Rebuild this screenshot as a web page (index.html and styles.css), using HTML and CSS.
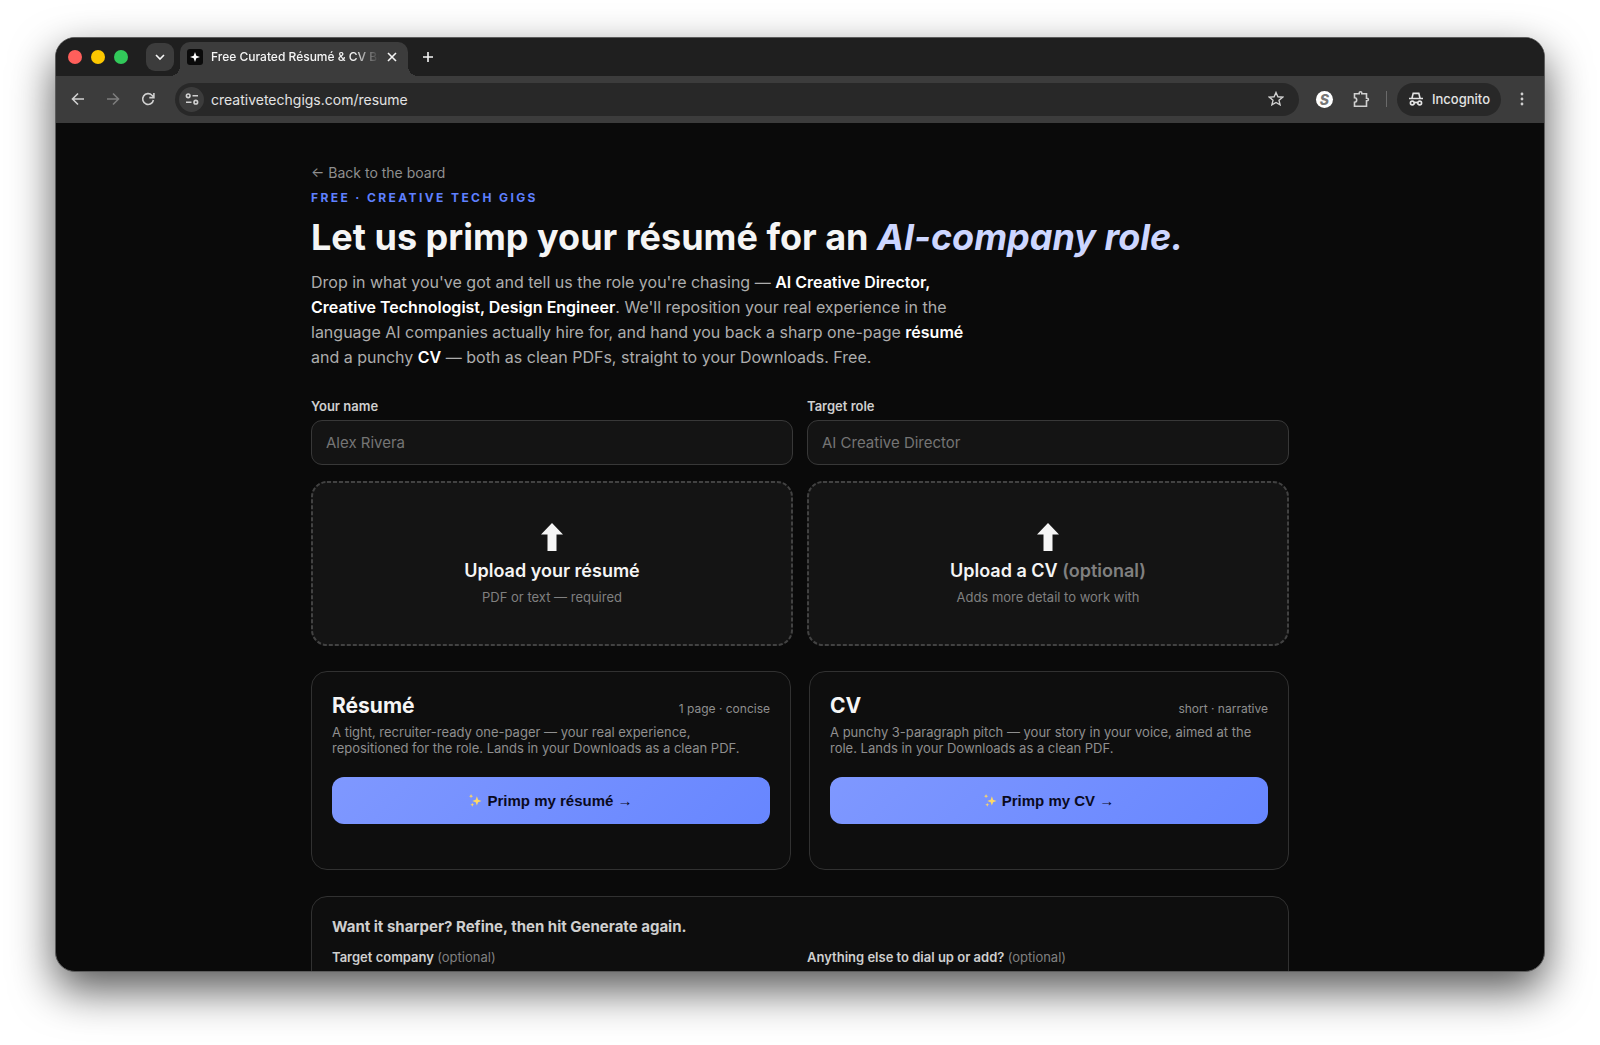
FILE: index.html
```html
<!DOCTYPE html>
<html lang="en">
<head>
  <meta charset="UTF-8">
  <title>Free Curated Résumé &amp; CV Builder</title>
  <link rel="stylesheet" href="styles.css">
</head>
<body>
  <div class="window">
    <div class="tab-strip">
      <div class="lights">
        <span class="light red"></span>
        <span class="light yellow"></span>
        <span class="light green"></span>
      </div>
      <button class="tab-search" aria-label="Search tabs">
        <svg width="12" height="12" viewBox="0 0 12 12"><path d="M2 4l4 4 4-4"/></svg>
      </button>
      <div class="tab">
        <svg class="favicon" width="16" height="16" viewBox="0 0 16 16">
          <rect width="16" height="16" rx="3"/>
          <path d="M8 3l1.300 3.700L13 8l-3.700 1.300L8 13l-1.300-3.700L3 8l3.700-1.300z"/>
        </svg>
        <span class="tab-title">Free Curated Résumé &amp; CV Builder</span>
        <button class="tab-close" aria-label="Close tab">
          <svg width="10" height="10" viewBox="0 0 10 10"><path d="M1 1l8 8M9 1l-8 8"/></svg>
        </button>
      </div>
      <button class="new-tab" aria-label="New tab">
        <svg width="12" height="12" viewBox="0 0 12 12"><path d="M6 1v10M1 6h10"/></svg>
      </button>
    </div>

    <div class="toolbar">
      <div class="nav">
        <button aria-label="Back">
          <svg width="16" height="16" viewBox="0 0 16 16"><path d="M14 8H3M8 2.500L2.500 8 8 13.500"/></svg>
        </button>
        <button class="off" aria-label="Forward">
          <svg width="16" height="16" viewBox="0 0 16 16"><path d="M2 8h11M8 2.500L13.500 8 8 13.500"/></svg>
        </button>
        <button aria-label="Reload">
          <svg width="16" height="16" viewBox="0 0 16 16"><path d="M13.400 9A5.400 5.400 0 1 1 12 4.300L13.800 6M13.900 2v4.600H9.300"/></svg>
        </button>
      </div>
      <div class="address">
        <button class="site-info" aria-label="Site information">
          <svg width="14" height="14" viewBox="0 0 14 14"><circle cx="3.200" cy="3.800" r="1.800"/><path d="M7.500 3.800H13M1 10.200h5.500"/><circle cx="10.800" cy="10.200" r="1.800"/></svg>
        </button>
        <input class="url" type="text" aria-label="Address" value="creativetechgigs.com/resume">
        <button class="star" aria-label="Bookmark this page">
          <svg width="16" height="16" viewBox="0 0 16 16"><path d="M8 1.500l1.900 4.300 4.700.4-3.600 3.100 1.100 4.600L8 11.500l-4.100 2.400L5 9.300 1.400 6.200l4.700-.4z"/></svg>
        </button>
      </div>
      <button class="ext" aria-label="Extension">S</button>
      <button class="puzzle" aria-label="Extensions">
        <svg width="18" height="18" viewBox="0 0 18 18"><path d="M2.500 3.800h4.700V3a1.300 1.300 0 0 1 2.600 0v.8h4.700v4.400h.6a1.300 1.300 0 0 1 0 2.600h-.6v5.400h-12v-4a2.200 2.200 0 0 0 0-4.400z"/></svg>
      </button>
      <span class="divider"></span>
      <button class="incognito">
        <svg width="16" height="16" viewBox="0 0 16 16"><path d="M4 7l1.200-4.600h5.600L12 7M1 7.500h14M6 12q2-1.200 4 0"/><circle cx="4.300" cy="12" r="1.900"/><circle cx="11.700" cy="12" r="1.900"/></svg>
        Incognito
      </button>
      <button class="menu" aria-label="Menu">
        <svg width="4" height="14" viewBox="0 0 4 14"><circle cx="2" cy="2" r="1.400"/><circle cx="2" cy="7" r="1.400"/><circle cx="2" cy="12" r="1.400"/></svg>
      </button>
    </div>

    <div class="page">
      <main class="container">
        <a class="back" href="/">← Back to the board</a>
        <p class="eyebrow">Free · Creative Tech Gigs</p>
        <h1>Let us primp your résumé for an <em>AI-company role.</em></h1>
        <p class="lead">Drop in what you've got and tell us the role you're chasing — <b>AI Creative Director, Creative Technologist, Design Engineer</b>. We'll reposition your real experience in the language AI companies actually hire for, and hand you back a sharp one-page <b>résumé</b> and a punchy <b>CV</b> — both as clean PDFs, straight to your Downloads. Free.</p>

        <form id="resumeForm">
          <div class="row">
            <div class="field">
              <label for="name">Your name</label>
              <input type="text" id="name" name="name" placeholder="Alex Rivera">
            </div>
            <div class="field">
              <label for="role">Target role</label>
              <input type="text" id="role" name="role" placeholder="AI Creative Director">
            </div>
          </div>

          <div class="row drops">
            <label class="drop" for="resumeFile">
              <svg class="dashes"><rect/></svg>
              <input type="file" id="resumeFile" name="resume">
              <svg class="up" width="22" height="28" viewBox="0 0 22 28"><path d="M11 0l11 11.500h-6.500V28h-9V11.500H0z"/></svg>
              <span class="drop-title">Upload your résumé</span>
              <span class="drop-note">PDF or text — required</span>
            </label>
            <label class="drop" for="cvFile">
              <svg class="dashes"><rect/></svg>
              <input type="file" id="cvFile" name="cv">
              <svg class="up" width="22" height="28" viewBox="0 0 22 28"><path d="M11 0l11 11.500h-6.500V28h-9V11.500H0z"/></svg>
              <span class="drop-title">Upload a CV <span class="opt">(optional)</span></span>
              <span class="drop-note">Adds more detail to work with</span>
            </label>
          </div>

          <div class="cards">
            <section class="card">
              <div class="card-head">
                <h2>Résumé</h2>
                <span class="tag">1 page · concise</span>
              </div>
              <p>A tight, recruiter-ready one-pager — your real experience, repositioned for the role. Lands in your Downloads as a clean PDF.</p>
              <button class="primp" type="button">
                <svg width="13" height="13" viewBox="0 0 14 14"><path d="M8.500 2.500L9.800 6.200 13.500 7.500 9.800 8.800 8.500 12.500 7.200 8.800 3.500 7.500 7.200 6.200zM2.200 0l.6 1.700 1.700.6-1.700.6-.6 1.700-.6-1.700L0 2.300l1.600-.6zM3.500 9.500l.6 1.500 1.500.6-1.500.6-.6 1.500-.6-1.500-1.500-.6 1.500-.6z"/></svg>
                <span>Primp my résumé <span class="arrow">→</span></span>
              </button>
              <div class="status"></div>
            </section>
            <section class="card">
              <div class="card-head">
                <h2>CV</h2>
                <span class="tag">short · narrative</span>
              </div>
              <p>A punchy 3-paragraph pitch — your story in your voice, aimed at the role. Lands in your Downloads as a clean PDF.</p>
              <button class="primp" type="button">
                <svg width="13" height="13" viewBox="0 0 14 14"><path d="M8.500 2.500L9.800 6.200 13.500 7.500 9.800 8.800 8.500 12.500 7.200 8.800 3.500 7.500 7.200 6.200zM2.200 0l.6 1.700 1.700.6-1.700.6-.6 1.700-.6-1.700L0 2.300l1.600-.6zM3.500 9.500l.6 1.500 1.500.6-1.500.6-.6 1.500-.6-1.500-1.500-.6 1.500-.6z"/></svg>
                <span>Primp my CV <span class="arrow">→</span></span>
              </button>
              <div class="status"></div>
            </section>
          </div>

          <section class="card refine">
            <h3>Want it sharper? Refine, then hit Generate again.</h3>
            <div class="row">
              <div class="field">
                <label for="company">Target company <span class="opt">(optional)</span></label>
                <input type="text" id="company" name="company">
              </div>
              <div class="field">
                <label for="extra">Anything else to dial up or add? <span class="opt">(optional)</span></label>
                <input type="text" id="extra" name="extra">
              </div>
            </div>
          </section>
        </form>
      </main>
    </div>
  </div>
</body>
</html>
```

FILE: styles.css
```css
* {
  box-sizing: border-box;
}
body {
  margin: 0;
  height: 100vh;
  padding: 37px 55px 73px;
  background: #fff;
  font-family: Inter, "Liberation Sans", sans-serif;
  color: #f5f5f5;
  overflow: hidden;
}
h1, h2, h3, p {
  margin: 0;
}
button {
  font: inherit;
  color: inherit;
  background: none;
  border: none;
  padding: 0;
}
svg {
  display: block;
  fill: none;
  stroke: currentColor;
  stroke-width: 1.6;
}

/* browser window */
.window {
  height: 100%;
  display: flex;
  flex-direction: column;
  background: #0a0a0a;
  border: 1px solid #5c5c5c;
  border-radius: 20px;
  overflow: hidden;
  box-shadow: 0 18px 44px rgba(0,0,0,0.66);
}
.tab-strip {
  display: flex;
  align-items: center;
  height: 38px;
  padding-left: 12px;
  background: #1f1f1f;
  flex-shrink: 0;
}
.lights {
  display: flex;
  gap: 9px;
}
.light {
  width: 14px;
  height: 14px;
  border-radius: 50%;
}
.red { background: #ff5f5b; }
.yellow { background: #fdc800; }
.green { background: #32c95a; }
.tab-search {
  display: grid;
  place-items: center;
  width: 28px;
  height: 28px;
  margin-left: 18px;
  border-radius: 9px;
  background: #3c3c3c;
}
.tab {
  position: relative;
  display: flex;
  align-items: center;
  align-self: flex-end;
  gap: 8px;
  width: 228px;
  height: 34px;
  margin-left: 6px;
  padding: 0 11px 5px 7px;
  border-radius: 10px 10px 0 0;
  background: #3c3c3c;
}
/* flared feet of the active tab */
.tab::before,
.tab::after {
  content: "";
  position: absolute;
  bottom: 0;
  width: 10px;
  height: 10px;
}
.tab::before {
  left: -10px;
  background: radial-gradient(circle at 0 0, transparent 10px, #3c3c3c 10px);
}
.tab::after {
  right: -10px;
  background: radial-gradient(circle at 100% 0, transparent 10px, #3c3c3c 10px);
}
.favicon {
  stroke: none;
  flex-shrink: 0;
}
.favicon rect { fill: #0a0a0a; }
.favicon path { fill: #fff; }
.tab-title {
  flex: 1;
  font-size: 12px;
  font-weight: 500;
  white-space: nowrap;
  overflow: hidden;
  mask-image: linear-gradient(to right, #000 85%, transparent);
}
.new-tab {
  margin-left: 14px;
}
.toolbar {
  display: flex;
  align-items: center;
  height: 47px;
  padding: 0 20px 1px 14px;
  background: #3c3c3c;
  color: #d0d0d0;
  flex-shrink: 0;
}
.nav {
  display: flex;
  gap: 19px;
}
.off {
  color: #7d7d7d;
}
.address {
  display: flex;
  align-items: center;
  flex: 1;
  height: 33px;
  margin-left: 19px;
  padding: 0 15px 0 4px;
  border-radius: 17px;
  background: #282828;
}
.site-info {
  display: grid;
  place-items: center;
  width: 25px;
  height: 25px;
  border-radius: 50%;
  background: #3c3c3c;
}
.url {
  flex: 1;
  margin: 0 7px;
  padding: 0;
  border: none;
  outline: none;
  background: none;
  color: #e3e3e3;
  font: 14px Inter, "Liberation Sans", sans-serif;
}
.star svg {
  stroke-width: 1.4;
}
.ext {
  width: 17px;
  height: 17px;
  margin-left: 17px;
  border-radius: 50%;
  background: #fff;
  color: #777;
  font-size: 14px;
  font-weight: 800;
  font-style: italic;
  line-height: 17px;
}
.puzzle {
  margin-left: 19px;
}
.divider {
  width: 1px;
  height: 16px;
  margin: 0 10px 0 16px;
  background: #6a6a6a;
}
.incognito {
  display: flex;
  align-items: center;
  gap: 8px;
  height: 33px;
  padding: 0 11px;
  border-radius: 17px;
  background: #282828;
  color: #e3e3e3;
  font-size: 13px;
  font-weight: 500;
}
.menu {
  margin-left: 19px;
}
.menu svg {
  fill: currentColor;
  stroke: none;
}

/* page */
.page {
  flex: 1;
  min-height: 0;
  overflow: hidden;
}
.container {
  max-width: 978px;
  margin: 0 auto;
  padding-top: 40px;
}
.back {
  display: block;
  font-size: 14px;
  line-height: 20px;
  color: #8f8f8f;
  text-decoration: none;
}
.eyebrow {
  margin-top: 7px;
  font-size: 12px;
  line-height: 16px;
  font-weight: 700;
  letter-spacing: 0.2em;
  text-transform: uppercase;
  color: #5f80ff;
}
h1 {
  margin-top: 9px;
  font-size: 36px;
  line-height: 44px;
  font-weight: 700;
}
h1 em {
  color: #cdd6ff;
}
.lead {
  max-width: 660px;
  margin-top: 11px;
  font-size: 16px;
  line-height: 25px;
  color: #adadad;
}
.lead b {
  font-weight: 600;
  color: #fff;
}
form {
  margin-top: 28px;
}
.row {
  display: grid;
  grid-template-columns: 1fr 1fr;
  gap: 14px;
}
.field {
  display: flex;
  flex-direction: column;
  gap: 6px;
}
.field label {
  font-size: 13px;
  line-height: 16px;
  font-weight: 600;
  color: #cfcfcf;
}
.field input {
  width: 100%;
  height: 45px;
  padding: 0 14px;
  border: 1px solid #383838;
  border-radius: 11px;
  background: #141414;
  color: #f5f5f5;
  font: 15px Inter, "Liberation Sans", sans-serif;
}
.field input::placeholder {
  color: #757575;
}
.drops {
  margin-top: 16px;
}
.drop {
  position: relative;
  display: flex;
  flex-direction: column;
  align-items: center;
  padding: 42px 20px 41px;
  border-radius: 16px;
  background: #141414;
}
.drop input {
  display: none;
}
.dashes {
  position: absolute;
  inset: 0;
  width: 100%;
  height: 100%;
}
.dashes rect {
  x: 1px;
  y: 1px;
  rx: 15px;
  width: calc(100% - 2px);
  height: calc(100% - 2px);
  stroke: #424242;
  stroke-width: 2;
  stroke-dasharray: 4 2;
}
.up {
  fill: #f5f5f5;
  stroke: none;
}
.drop-title {
  margin-top: 8px;
  font-size: 18px;
  line-height: 24px;
  font-weight: 600;
}
.drop-note {
  margin-top: 6px;
  font-size: 13px;
  line-height: 16px;
  color: #808080;
}
.opt {
  color: #808080;
}
.field .opt {
  font-weight: 400;
}
.cards {
  display: grid;
  grid-template-columns: 1fr 1fr;
  gap: 18px;
  margin-top: 25px;
}
.card {
  padding: 20px;
  border: 1px solid #313131;
  border-radius: 16px;
  background: #0e0e0e;
}
.card-head {
  display: flex;
  justify-content: space-between;
  align-items: baseline;
}
.card h2 {
  font-size: 21px;
  line-height: 28px;
  font-weight: 700;
}
.tag {
  font-size: 12px;
  color: #8f8f8f;
}
.card p {
  margin-top: 4px;
  font-size: 13px;
  line-height: 16px;
  color: #8f8f8f;
}
.primp {
  display: flex;
  justify-content: center;
  align-items: center;
  gap: 5px;
  width: 100%;
  height: 47px;
  margin-top: 21px;
  border-radius: 12px;
  background: linear-gradient(135deg, #7f98ff, #6786ff);
  color: #0a0a1e;
  font-family: "Liberation Sans", Arial, sans-serif;
  font-size: 15px;
  font-weight: 700;
}
.primp svg {
  fill: #ffd866;
  stroke: none;
}
.arrow {
  font-weight: 400;
}
.status {
  height: 25px;
}
.refine {
  margin-top: 26px;
}
.refine h3 {
  margin-bottom: 12px;
  font-size: 15px;
  line-height: 20px;
  font-weight: 700;
  color: #cfcfcf;
}
```
